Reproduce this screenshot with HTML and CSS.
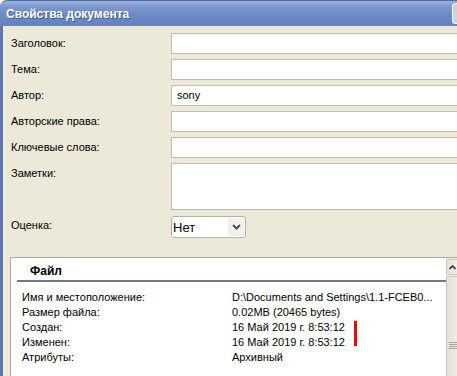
FILE: index.html
```html
<!DOCTYPE html>
<html lang="ru">
<head>
  <meta charset="UTF-8">
  <title>Свойства документа</title>
  <link rel="stylesheet" href="styles.css">
</head>
<body>
  <div class="window">
    <div class="titlebar">
      <span class="title">Свойства документа</span>
      <span class="close">
        <svg width="19" height="19" viewBox="0 0 19 19"><path d="M5 5 L14 14 M14 5 L5 14" stroke="#fff" stroke-width="2"/></svg>
      </span>
    </div>
    <div class="frame">
      <div class="form">
        <div class="label">Заголовок:</div><div class="field"></div>
        <div class="label">Тема:</div><div class="field"></div>
        <div class="label">Автор:</div><div class="field">sony</div>
        <div class="label">Авторские права:</div><div class="field"></div>
        <div class="label">Ключевые слова:</div><div class="field"></div>
        <div class="label">Заметки:</div><div class="field notes"></div>
        <div class="label">Оценка:</div>
        <div class="select">
          <span class="select-value">Нет</span>
          <span class="select-btn">
            <svg width="9" height="6" viewBox="0 0 9 6"><path d="M1 1 L4.5 4.5 L8 1" fill="none" stroke="#4d4d4d" stroke-width="2"/></svg>
          </span>
        </div>
      </div>

      <div class="panel">
        <div class="panel-content">
          <div class="section-title"><span>Файл</span></div>
          <div class="info">
            <div class="info-label">Имя и местоположение:</div><div class="info-value">D:\Documents and Settings\1.1-FCEB0...</div>
            <div class="info-label">Размер файла:</div><div class="info-value">0.02MB (20465 bytes)</div>
            <div class="info-label">Создан:</div><div class="info-value">16 Май 2019 г. 8:53:12</div>
            <div class="info-label">Изменен:</div><div class="info-value">16 Май 2019 г. 8:53:12</div>
            <div class="info-label">Атрибуты:</div><div class="info-value">Архивный</div>
            <div class="mark"></div>
          </div>
        </div>
        <div class="scrollbar">
          <div class="scroll-up">
            <svg width="7" height="5" viewBox="0 0 7 5"><path d="M0.5 4 L3.5 1 L6.5 4" fill="none" stroke="#333" stroke-width="1.6"/></svg>
          </div>
          <div class="scroll-thumb">
            <div class="grip"></div>
          </div>
        </div>
      </div>
    </div>
  </div>
</body>
</html>
```

FILE: styles.css
```css
body {
  margin: 0;
  background: #fff;
  overflow: hidden;
  font-family: 'Liberation Sans', Tahoma, sans-serif;
  font-size: 11px;
  color: #000;
}

.window {
  width: 480px;
  height: 376px;
  display: flex;
  flex-direction: column;
}

.titlebar {
  width: 480px;
  height: 26px;
  flex-shrink: 0;
  display: flex;
  align-items: center;
  padding-left: 6px;
  border-top-left-radius: 7px;
  border-top: 1px solid #4f6ea8;
  box-sizing: border-box;
  background: linear-gradient(#9ab0da, #7c97cd 25%, #6c89c4 60%, #6381bd);
}

.title {
  flex: 1;
  color: #fff;
  font-weight: bold;
  font-size: 12px;
  text-shadow: 1px 1px 0 #3f5d96;
}

.close {
  flex-shrink: 0;
  margin-right: 7px;
  width: 21px;
  height: 21px;
  border: 1px solid #fff;
  border-radius: 3px;
  box-sizing: border-box;
  background: #c9d3e6;
}

.close svg {
  display: block;
}

.frame {
  flex: 1;
  display: flex;
  flex-direction: column;
  border-left: 3px solid #5977b3;
  background: #ece9d8;
  min-height: 0;
}

.form {
  display: grid;
  grid-template-columns: 160px 1fr;
  row-gap: 5px;
  padding: 7px 0 0 8px;
}

.label {
  line-height: 21px;
}

.field {
  height: 21px;
  box-sizing: border-box;
  border: 1px solid #c0bcb1;
  background: #fff;
  padding-left: 5px;
  line-height: 19px;
}

.field.notes {
  height: 47px;
}

.select {
  width: 75px;
  height: 22px;
  margin-top: 1px;
  box-sizing: border-box;
  border: 1px solid #b5b2a7;
  border-radius: 3px;
  background: #fff;
  display: flex;
  align-items: center;
}

.select-value {
  flex: 1;
  padding-left: 1px;
  font-size: 13px;
}

.select-btn {
  width: 16px;
  height: 18px;
  margin-right: 1px;
  background: #f1f0ea;
  display: flex;
  align-items: center;
  justify-content: center;
}

.panel {
  flex: 1;
  margin: 19px 0 0 7px;
  width: 453px;
  display: flex;
  border-top: 1px solid #aca899;
  border-left: 1px solid #aca899;
  background: #fff;
}

.panel-content {
  flex: 1;
  padding-top: 5px;
}

.section-title {
  margin-left: 6px;
  padding-left: 13px;
  line-height: 17px;
  font-weight: bold;
  font-size: 12px;
  border-bottom: 2px solid #6b7a8c;
}

.info {
  position: relative;
  margin: 8px 0 0 11px;
  display: grid;
  grid-template-columns: 210px 1fr;
  line-height: 15px;
}

.info-value {
  white-space: nowrap;
}

.mark {
  position: absolute;
  left: 332px;
  top: 31px;
  width: 3px;
  height: 25px;
  background: #ff0000;
}

.scrollbar {
  width: 18px;
  display: flex;
  flex-direction: column;
  background: #f3f1ea;
}

.scroll-up {
  height: 14px;
  margin: 1px 0 1px 0;
  border: 1px solid #c9c6bb;
  border-radius: 2px;
  background: linear-gradient(90deg, #e6e3da, #f7f6f2);
  display: flex;
  align-items: center;
  justify-content: center;
  padding-right: 5px;
}

.scroll-thumb {
  height: 136px;
  border: 1px solid #c9c6bb;
  border-radius: 2px;
  background: linear-gradient(90deg, #e3e0d6, #f5f4ef);
  display: flex;
  align-items: center;
  padding-left: 2px;
}

.grip {
  width: 8px;
  height: 7px;
  background: repeating-linear-gradient(#a7a59b 0 1px, transparent 1px 2px);
}
```
